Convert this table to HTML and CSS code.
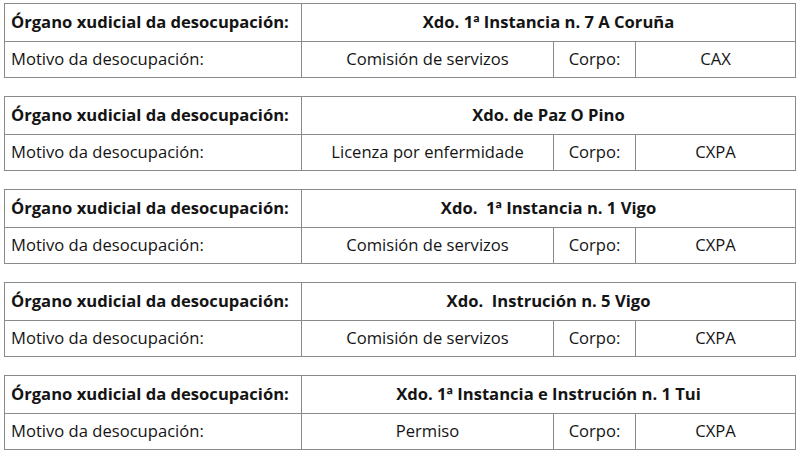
FILE: index.html
```html
<!DOCTYPE html>
<html lang="gl">
<head>
<meta charset="utf-8">
<link rel="stylesheet" href="styles.css">
</head>
<body>
<div class="list">
  <table class="vac">
    <colgroup><col class="c1"><col class="c2"><col class="c3"><col class="c4"></colgroup>
    <tr class="head"><th class="lbl">Órgano xudicial da desocupación:</th><th colspan="3" class="org">Xdo. 1ª Instancia n. 7 A Coruña</th></tr>
    <tr class="row"><td class="lbl">Motivo da desocupación:</td><td>Comisión de servizos</td><td>Corpo:</td><td>CAX</td></tr>
  </table>
  <table class="vac">
    <colgroup><col class="c1"><col class="c2"><col class="c3"><col class="c4"></colgroup>
    <tr class="head"><th class="lbl">Órgano xudicial da desocupación:</th><th colspan="3" class="org">Xdo. de Paz O Pino</th></tr>
    <tr class="row"><td class="lbl">Motivo da desocupación:</td><td>Licenza por enfermidade</td><td>Corpo:</td><td>CXPA</td></tr>
  </table>
  <table class="vac">
    <colgroup><col class="c1"><col class="c2"><col class="c3"><col class="c4"></colgroup>
    <tr class="head"><th class="lbl">Órgano xudicial da desocupación:</th><th colspan="3" class="org">Xdo.&nbsp; 1ª Instancia n. 1 Vigo</th></tr>
    <tr class="row"><td class="lbl">Motivo da desocupación:</td><td>Comisión de servizos</td><td>Corpo:</td><td>CXPA</td></tr>
  </table>
  <table class="vac">
    <colgroup><col class="c1"><col class="c2"><col class="c3"><col class="c4"></colgroup>
    <tr class="head"><th class="lbl">Órgano xudicial da desocupación:</th><th colspan="3" class="org">Xdo.&nbsp; Instrución n. 5 Vigo</th></tr>
    <tr class="row"><td class="lbl">Motivo da desocupación:</td><td>Comisión de servizos</td><td>Corpo:</td><td>CXPA</td></tr>
  </table>
  <table class="vac">
    <colgroup><col class="c1"><col class="c2"><col class="c3"><col class="c4"></colgroup>
    <tr class="head"><th class="lbl">Órgano xudicial da desocupación:</th><th colspan="3" class="org">Xdo. 1ª Instancia e Instrución n. 1 Tui</th></tr>
    <tr class="row"><td class="lbl">Motivo da desocupación:</td><td>Permiso</td><td>Corpo:</td><td>CXPA</td></tr>
  </table>
</div>
</body>
</html>
```
FILE: styles.css
```css
html, body {
  margin: 0;
  padding: 0;
  background: #ffffff;
}
body {
  font-family: "Open Sans", "Noto Sans", sans-serif;
  color: #141414;
  font-size: 16.6px;
}
.list {
  padding: 3px 0 0 4px;
  display: flex;
  flex-direction: column;
  gap: 18px;
}
.vac {
  border-collapse: collapse;
  table-layout: fixed;
  width: 791px;
}
.c1 { width: 297px; }
.c2 { width: 252px; }
.c3 { width: 82px; }
.c4 { width: 160px; }
.vac th, .vac td {
  border: 1px solid #8a8a8a;
  padding: 0 6px;
  text-align: center;
  white-space: nowrap;
  overflow: hidden;
  line-height: 20px;
}
.head th { height: 35px; font-weight: 700; padding-bottom: 2px; }
.row td { height: 34px; font-weight: 400; padding-bottom: 1px; }
.vac .lbl { text-align: left; }
```
